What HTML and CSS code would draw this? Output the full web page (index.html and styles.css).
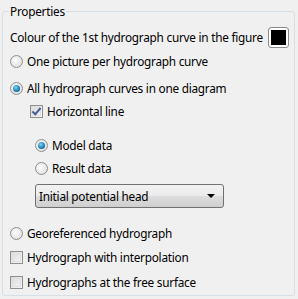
FILE: index.html
```html
<!DOCTYPE html>
<html lang="en">
<head>
  <meta charset="UTF-8">
  <title>Hydrograph Properties</title>
  <link rel="stylesheet" href="styles.css">
</head>
<body>
  <fieldset class="group">
    <legend>Properties</legend>

    <!-- Colour picker row -->
    <div class="row colour-row">
      <span>Colour of the 1st hydrograph curve in the figure</span>
      <span class="swatch"><span class="swatch-fill"></span></span>
    </div>

    <label class="row gap-8"><input type="radio" name="mode"> One picture per hydrograph curve</label>
    <label class="row gap-11"><input type="radio" name="mode" checked> All hydrograph curves in one diagram</label>

    <div class="sub">
      <label class="row gap-7"><input type="checkbox" checked> Horizontal line</label>
      <div class="sub2">
        <label class="row gap-18"><input type="radio" name="src" checked> Model data</label>
        <label class="row gap-7"><input type="radio" name="src"> Result data</label>
        <div class="select gap-8">
          <span>Initial potential head</span>
          <span class="arrow"></span>
        </div>
      </div>
    </div>

    <label class="row gap-17"><input type="radio" name="mode"> Georeferenced hydrograph</label>
    <label class="row gap-8"><input type="checkbox"> Hydrograph with interpolation</label>
    <label class="row gap-9"><input type="checkbox"> Hydrographs at the free surface</label>
  </fieldset>
</body>
</html>
```

FILE: styles.css
```css
/* Page */
body {
  margin: 0;
  background: #f0f0f0;
  font-family: "Noto Sans", sans-serif;
  font-size: 11.8px;
  letter-spacing: -0.25px;
  color: #000;
}

/* Group box */
.group {
  margin: 3px 3px 3px 2px;
  padding: 0 5px 5px 7px;
  border: 1px solid #d5dfe5;
  border-radius: 3px;
  box-sizing: border-box;
  height: 293px;
}
.group legend {
  padding: 0 1px;
  margin-left: -1px;
  line-height: 16px;
}

/* Rows */
.row {
  display: flex;
  align-items: center;
  height: 16px;
  line-height: 16px;
  white-space: nowrap;
}
.colour-row {
  margin-top: 10px;
  justify-content: space-between;
}
.gap-7 { margin-top: 7px; }
.gap-8 { margin-top: 8px; }
.gap-9 { margin-top: 9px; }
.gap-11 { margin-top: 11px; }
.gap-17 { margin-top: 17px; }
.gap-18 { margin-top: 18px; }

.sub { padding-left: 20px; }
.sub2 { padding-left: 5px; }

/* Colour swatch */
.swatch {
  width: 21px;
  height: 21px;
  box-sizing: border-box;
  border: 1px solid #8a8a8a;
  border-radius: 3px;
  background: #fff;
  padding: 2px;
  flex: none;
}
.swatch-fill {
  display: block;
  width: 100%;
  height: 100%;
  background: #000;
}

/* Radio buttons */
input[type="radio"] {
  appearance: none;
  width: 13px;
  height: 13px;
  margin: 0 4px 0 0;
  border-radius: 50%;
  border: 1px solid #8e8f8f;
  background: radial-gradient(circle at 40% 40%, #fdfdfd, #d8d8d8);
  box-sizing: border-box;
  position: relative;
  flex: none;
}
input[type="radio"]:checked::after {
  content: "";
  position: absolute;
  left: 2px;
  top: 2px;
  width: 7px;
  height: 7px;
  border-radius: 50%;
  background: radial-gradient(circle at 40% 35%, #7cd4f8, #0e6ea6 70%, #1b4d72);
}

/* Checkboxes */
input[type="checkbox"] {
  appearance: none;
  width: 13px;
  height: 13px;
  margin: 0 4px 0 0;
  border: 1px solid #8e8f8f;
  background: linear-gradient(135deg, #d9d9d9, #f7f7f7);
  box-sizing: border-box;
  position: relative;
  flex: none;
}
input[type="checkbox"]::before {
  content: "";
  position: absolute;
  inset: 1px;
  border: 1px solid #e0e0e0;
}
input[type="checkbox"]:checked::after {
  content: "";
  position: absolute;
  left: 3px;
  top: 0px;
  width: 3px;
  height: 7px;
  border: solid #4a5f97;
  border-width: 0 2px 2px 0;
  transform: rotate(40deg);
}

/* Dropdown */
.select {
  width: 189px;
  height: 24px;
  box-sizing: border-box;
  border: 1px solid #707070;
  border-radius: 3px;
  background: linear-gradient(#f2f2f2, #ebebeb 50%, #dddddd 51%, #cfcfcf);
  display: flex;
  align-items: center;
  justify-content: space-between;
  padding: 0 8px 0 3px;
}
.arrow {
  width: 0;
  height: 0;
  border-left: 4px solid transparent;
  border-right: 4px solid transparent;
  border-top: 4px solid #000;
}
```
